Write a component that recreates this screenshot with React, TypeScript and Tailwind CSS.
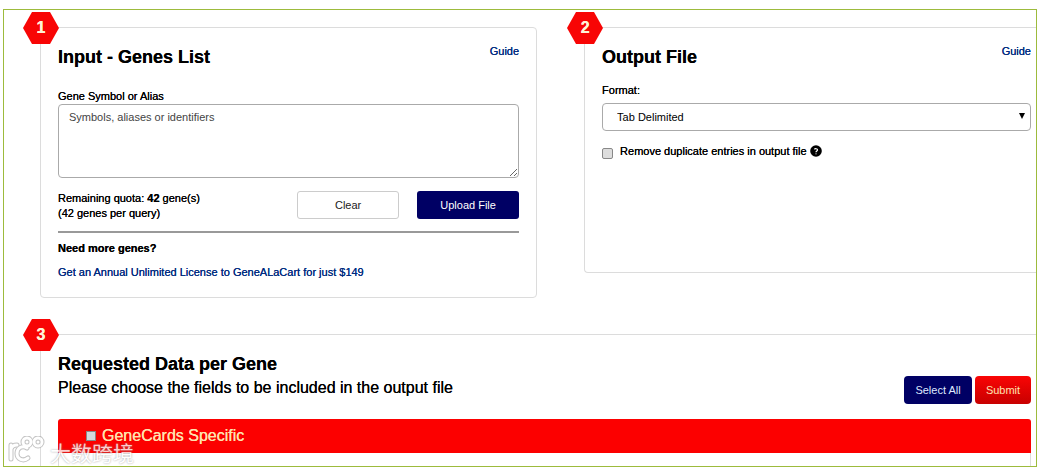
import { useState } from "react";
import type { ReactNode } from "react";

interface StepProps {
  step: number;
  className: string;
  children: ReactNode;
}

function StepCard({ step, className, children }: StepProps) {
  return (
    <section className={`relative border-[#dcdcdc] pl-[17px] pt-[15px] ${className}`}>
      <div className="absolute -left-[18px] -top-4 flex h-8 w-9 items-center justify-center">
        <svg viewBox="0 0 36 32" className="absolute inset-0 h-8 w-9" aria-hidden="true">
          <path d="M9 0H27L36 16L27 32H9L0 16Z" fill="#f80505" />
        </svg>
        <span className="relative text-base font-bold leading-8 text-[#fff3d8]">{step}</span>
      </div>
      {children}
    </section>
  );
}

function CardHeader({ title }: { title: string }) {
  return (
    <div className="flex items-start justify-between">
      <h2 className="text-lg font-bold leading-7">{title}</h2>
      <a href="#guide" className="leading-4 text-[#002b80]">
        Guide
      </a>
    </div>
  );
}

function WatermarkStrokes() {
  return (
    <>
      <path d="M3 9V23M3 13C4 10 6 9 9 9" />
      <path d="M19 12C14 9 9 12 9 17.500S15 26 20 22" />
      <circle cx="19" cy="6" r="4" />
      <circle cx="30" cy="6" r="4" />
    </>
  );
}

function Watermark() {
  return (
    <div className="pointer-events-none absolute bottom-0 left-1 flex items-end gap-1 opacity-80">
      <svg viewBox="0 0 38 30" className="h-[30px] w-[38px]" fill="none" strokeLinecap="round" aria-hidden="true">
        <g stroke="#b5b5b5" strokeWidth="5">
          <WatermarkStrokes />
        </g>
        <g stroke="#ffffff" strokeWidth="3">
          <WatermarkStrokes />
        </g>
      </svg>
      <span className="font-['Noto_Sans_CJK_SC',sans-serif] text-[21px] leading-7 text-white [text-shadow:0_0_2px_#888]">
        大数跨境
      </span>
    </div>
  );
}

export default function App() {
  const [genes, setGenes] = useState("");
  const [format, setFormat] = useState("tab");

  return (
    <div className="bg-white pb-[3px] pl-[3px] pr-1.5 pt-[9px] font-['Liberation_Sans',Arial,sans-serif] text-[11px] text-black [text-shadow:0_0_0_currentColor]">
      <main className="relative overflow-hidden border border-[#9dbb3c] pl-9 pt-[17px]">
        <div className="grid grid-cols-[11fr_10fr] items-start gap-[47px]">
          <StepCard step={1} className="rounded border pb-[17px] pr-[17px]">
            <CardHeader title="Input - Genes List" />
            <label htmlFor="genes" className="mt-[17px] block leading-4">
              Gene Symbol or Alias
            </label>
            <textarea
              id="genes"
              value={genes}
              onChange={(e) => setGenes(e.target.value)}
              placeholder="Symbols, aliases or identifiers"
              className="block h-[74px] w-full resize rounded border border-[#aaa] px-2.5 py-1 leading-4 placeholder:text-[#444]"
            />
            <div className="mt-[13px] flex items-start justify-between">
              <p className="leading-[15px]">
                Remaining quota: <b>42</b> gene(s)
                <br />
                (42 genes per query)
              </p>
              <div className="flex gap-[18px]">
                <button
                  type="button"
                  onClick={() => setGenes("")}
                  className="h-7 w-[102px] rounded-[3px] border border-[#ccc] bg-white text-[#222]"
                >
                  Clear
                </button>
                <button type="button" className="h-7 w-[102px] rounded-[3px] bg-[#000064] text-white">
                  Upload File
                </button>
              </div>
            </div>
            <hr className="mt-2.5 border-t-2 border-[#999]" />
            <p className="mt-[7px] font-bold leading-4">Need more genes?</p>
            <a href="#license" className="mt-2 block leading-4 text-[#002b80]">
              Get an Annual Unlimited License to GeneALaCart for just $149
            </a>
          </StepCard>

          <StepCard step={2} className="min-h-[246px] rounded-l border-y border-l pr-[5px]">
            <CardHeader title="Output File" />
            <label htmlFor="format" className="mt-[11px] block leading-4">
              Format:
            </label>
            <div className="relative mt-[5px]">
              <select
                id="format"
                value={format}
                onChange={(e) => setFormat(e.target.value)}
                className="block h-7 w-full appearance-none rounded border border-[#aaa] bg-white px-3.5"
              >
                <option value="tab">Tab Delimited</option>
                <option value="csv">Comma Delimited</option>
              </select>
              <svg
                viewBox="0 0 6 6"
                className="pointer-events-none absolute right-1.5 top-2.5 size-1.5"
                aria-hidden="true"
              >
                <path d="M0 0H6L3 6Z" fill="#000" />
              </svg>
            </div>
            <div className="mt-3 flex items-center">
              <input
                id="dedupe"
                type="checkbox"
                className="mt-1 size-[11px] appearance-none rounded-[2px] border border-[#888] bg-[#ddd] checked:bg-[#000064]"
              />
              <label htmlFor="dedupe" className="ml-[7px] leading-4">
                Remove duplicate entries in output file
              </label>
              <svg viewBox="0 0 12 12" className="ml-[3px] size-3" aria-hidden="true">
                <circle cx="6" cy="6" r="5.8" fill="#000" />
                <path d="M4.4 4.4C4.8 3.4 7.6 3.4 7.5 5C7.4 6 6 6 6 7.2" fill="none" stroke="#fff" strokeWidth="1.2" />
                <circle cx="6" cy="8.8" r=".6" fill="#fff" />
              </svg>
            </div>
          </StepCard>
        </div>

        <StepCard step={3} className="mt-9 rounded-tl border-l border-t pr-[5px]">
          <div className="flex items-end justify-between">
            <div className="pb-1.5">
              <h2 className="text-lg font-bold leading-7">Requested Data per Gene</h2>
              <p className="text-base leading-5">Please choose the fields to be included in the output file</p>
            </div>
            <div className="flex gap-[3px]">
              <button type="button" className="h-7 w-[68px] rounded bg-[#000064] text-[#dfe8ff]">
                Select All
              </button>
              <button
                type="submit"
                className="h-7 w-14 rounded bg-linear-to-b from-[#fa0505] to-[#c80000] text-[#ffe2b0]"
              >
                Submit
              </button>
            </div>
          </div>
          <div className="mt-[15px] flex h-[34px] items-center rounded-t-[3px] bg-[#fc0000] pl-7">
            <input
              id="genecards"
              type="checkbox"
              className="size-2.5 appearance-none border border-[#888] bg-[#d4d8dc] checked:bg-[#000064]"
            />
            <label htmlFor="genecards" className="ml-1.5 text-base leading-5 text-[#ffe2b0]">
              GeneCards Specific
            </label>
          </div>
          <div className="h-[13px] border-x border-[#dcdcdc]" />
        </StepCard>
        <Watermark />
      </main>
    </div>
  );
}
